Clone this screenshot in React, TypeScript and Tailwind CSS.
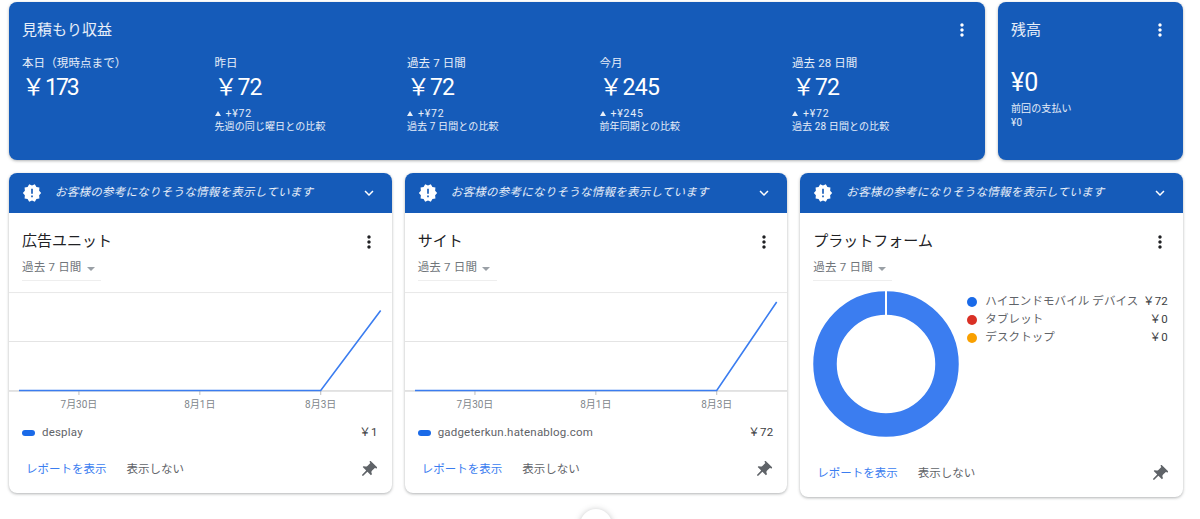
const font = '[font-family:Roboto,"Noto_Sans_CJK_JP",sans-serif]';

function Kebab({ className }: { className: string }) {
  return (
    <svg viewBox="0 0 24 24" className={`h-[20px] w-[20px] ${className}`} fill="currentColor">
      <path d="M12 8c1.1 0 2-.9 2-2s-.9-2-2-2-2 .9-2 2 .9 2 2 2zm0 2c-1.1 0-2 .9-2 2s.9 2 2 2 2-.9 2-2-.9-2-2-2zm0 6c-1.1 0-2 .9-2 2s.9 2 2 2 2-.9 2-2-.9-2-2-2z" />
    </svg>
  );
}

function Metric({ label, value, digitsClass, delta, note }: { label: string; value: string; digitsClass: string; delta?: string; note?: string }) {
  return (
    <div className="flex flex-col">
      <div className="h-[18px] text-[11.5px] leading-[18px] tracking-[0.1px] text-white/90 whitespace-nowrap">{label}</div>
      <div className="h-[32px] text-[23px] leading-[32px] text-white whitespace-nowrap">
        ￥<span className={digitsClass}>{value}</span>
      </div>
      {delta && (
        <div className="mt-[3px] flex h-[13px] items-center text-[10.5px] leading-[13px] tracking-[0.8px] text-white/90">
          <span className="h-0 w-0 border-x-[3px] border-b-[5px] border-x-transparent border-b-white/90" />
          <span className="ml-[5px]">{delta}</span>
        </div>
      )}
      {note && <div className="h-[14px] text-[10px] leading-[14px] tracking-[0.1px] text-white/90 whitespace-nowrap">{note}</div>}
    </div>
  );
}

function Banner() {
  return (
    <div className="flex h-[40px] items-center rounded-t-[8px] bg-[#155bb9] pl-[13px] pr-[14px] text-white">
      <svg viewBox="0 0 24 24" className="h-[20px] w-[20px]" fill="currentColor">
        <path d="M23 12l-2.44-2.78.34-3.68-3.61-.82-1.89-3.18L12 3 8.6 1.54 6.71 4.72l-3.61.81.34 3.68L1 12l2.44 2.78-.34 3.69 3.61.82 1.89 3.18L12 21l3.4 1.46 1.89-3.18 3.61-.82-.34-3.68L23 12zm-10 5h-2v-2h2v2zm0-4h-2V7h2v6z" />
      </svg>
      <span className="ml-[13px] flex-1 text-[11.5px] italic tracking-[0.25px] text-white/90 whitespace-nowrap">お客様の参考になりそうな情報を表示しています</span>
      <svg viewBox="0 0 24 24" className="h-[18px] w-[18px]" fill="currentColor">
        <path d="M16.59 8.59L12 13.17 7.41 8.59 6 10l6 6 6-6z" />
      </svg>
    </div>
  );
}

function CardHead({ title }: { title: string }) {
  return (
    <div className="pl-[13px] pr-[13px]">
      <div className="flex h-[28px] items-center justify-between pt-[1px]">
        <span className="text-[15px] text-[#202124] whitespace-nowrap">{title}</span>
        <Kebab className="text-[#202124]" />
      </div>
      <div className="flex h-[26px] w-[79px] items-center border-b border-[#eeeeee] pt-[1px]">
        <span className="text-[11.5px] tracking-[0.2px] text-[#70757a] whitespace-nowrap">過去 7 日間</span>
        <span className="ml-[5px] mt-[1px] h-0 w-0 border-x-[4.5px] border-t-[4px] border-x-transparent border-t-[#9aa0a6]" />
      </div>
    </div>
  );
}

function Chart({ d }: { d: string }) {
  return (
    <svg viewBox="0 0 383 122" className="mt-[11px] block h-[122px] w-full">
      <line x1="0" x2="383" y1="0.5" y2="0.5" stroke="#e8e8e8" />
      <line x1="0" x2="383" y1="49.5" y2="49.5" stroke="#e4e4e4" />
      <line x1="0" x2="383" y1="99" y2="99" stroke="#c8c8c8" />
      {[70, 191, 312].map((x) => (
        <line key={x} x1={x} x2={x} y1="99" y2="103" stroke="#bdbdbd" />
      ))}
      <path d={d} fill="none" stroke="#3b7df0" strokeWidth="1.6" />
      <g fontSize="10" fill="#80868b" textAnchor="middle" fontFamily='Roboto,"Noto Sans CJK JP",sans-serif'>
        <text x="70" y="116">7月30日</text>
        <text x="191" y="116">8月1日</text>
        <text x="312" y="116">8月3日</text>
      </g>
    </svg>
  );
}

function Footer({ className }: { className: string }) {
  return (
    <div className={`flex items-center pl-[17px] pr-[14px] text-[11.5px] ${className}`}>
      <span className="text-[#3b7df0] whitespace-nowrap">レポートを表示</span>
      <span className="ml-[20px] text-[#5f6368] whitespace-nowrap">表示しない</span>
      <svg viewBox="0 0 24 24" className="ml-auto h-[20px] w-[20px] rotate-45 text-[#5f6368]" fill="currentColor">
        <path d="M16 9V4h1c.55 0 1-.45 1-1s-.45-1-1-1H7c-.55 0-1 .45-1 1s.45 1 1 1h1v5c0 1.66-1.34 3-3 3v2h5.97v7l1 1 1-1v-7H19v-2c-1.66 0-3-1.34-3-3z" />
      </svg>
    </div>
  );
}

function LineCard({ title, name, value, d }: { title: string; name: string; value: string; d: string }) {
  return (
    <div className="flex h-[320px] flex-col rounded-[8px] bg-white shadow-[0_1px_3px_rgba(60,64,67,0.4)]">
      <Banner />
      <div className="pt-[14px]"><CardHead title={title} /></div>
      <Chart d={d} />
      <div className="mt-[10px] flex h-[18px] items-center pl-[13px] pr-[14px] text-[11.5px]">
        <span className="h-[6px] w-[13px] rounded-full bg-[#1a6ae8]" />
        <span className="ml-[7px] tracking-[0.2px] text-[#5f6368]">{name}</span>
        <span className="ml-auto tracking-[0.2px] text-[#3c4043]">{value}</span>
      </div>
      <Footer className="mt-[19px] h-[18px]" />
    </div>
  );
}

function Donut() {
  return (
    <svg viewBox="0 0 146 146" className="h-[146px] w-[146px] shrink-0">
      <circle cx="73" cy="73" r="61" fill="none" stroke="#3b7df0" strokeWidth="23.5" />
      <line x1="73" x2="73" y1="0" y2="24" stroke="#fff" strokeWidth="2" />
    </svg>
  );
}

function LegendRow({ color, name, value }: { color: string; name: string; value: string }) {
  return (
    <div className="flex h-[18px] items-center text-[11.5px]">
      <span className={`h-[10px] w-[10px] rounded-full ${color}`} />
      <span className="ml-[8px] tracking-[0.1px] text-[#5f6368] whitespace-nowrap">{name}</span>
      <span className="ml-auto tracking-[0.2px] text-[#3c4043]">{value}</span>
    </div>
  );
}

export default function App() {
  return (
    <div className={`relative h-[519px] overflow-hidden bg-white pl-[9px] pr-[17px] pt-[2px] ${font}`}>
      <div className="flex gap-[13px]">
        <div className="h-[158px] w-[976px] rounded-[8px] bg-[#155bb9] pl-[13px] pr-[13px] pt-[18px] shadow-[0_1px_3px_rgba(60,64,67,0.4)]">
          <div className="flex h-[20px] items-center justify-between">
            <span className="text-[15px] text-white/90">見積もり収益</span>
            <Kebab className="text-white" />
          </div>
          <div className="mt-[14px] grid grid-cols-[192.5px_192.5px_192.5px_192.5px_1fr]">
            <Metric label="本日（現時点まで）" value="173" digitsClass="tracking-[-2px]" />
            <Metric label="昨日" value="72" digitsClass="tracking-[-1px]" delta="+¥72" note="先週の同じ曜日との比較" />
            <Metric label="過去 7 日間" value="72" digitsClass="tracking-[-1px]" delta="+¥72" note="過去 7 日間との比較" />
            <Metric label="今月" value="245" digitsClass="tracking-[-0.7px]" delta="+¥245" note="前年同期との比較" />
            <Metric label="過去 28 日間" value="72" digitsClass="tracking-[-1px]" delta="+¥72" note="過去 28 日間との比較" />
          </div>
        </div>
        <div className="h-[158px] flex-1 rounded-[8px] bg-[#155bb9] pl-[13px] pr-[13px] pt-[18px] shadow-[0_1px_3px_rgba(60,64,67,0.4)]">
          <div className="flex h-[20px] items-center justify-between">
            <span className="text-[15px] text-white/90">残高</span>
            <Kebab className="text-white" />
          </div>
          <div className="mt-[27px] h-[32px] text-[25px] leading-[32px] text-white">¥0</div>
          <div className="mt-[3px] h-[14px] text-[10px] leading-[14px] tracking-[0.1px] text-white/90">前回の支払い</div>
          <div className="h-[14px] text-[10px] leading-[14px] tracking-[0.3px] text-white/90">¥0</div>
        </div>
      </div>

      <div className="mt-[13px] grid grid-cols-3 items-start gap-[13px]">
        <LineCard title="広告ユニット" name="desplay" value="￥1" d="M10 98.5H312L372 18.5" />
        <LineCard title="サイト" name="gadgeterkun.hatenablog.com" value="￥72" d="M10 98.5H312L372 10" />
        <div className="flex h-[324px] flex-col rounded-[8px] bg-white shadow-[0_1px_3px_rgba(60,64,67,0.4)]">
          <Banner />
          <div className="pt-[14px]"><CardHead title="プラットフォーム" /></div>
          <div className="mt-[10px] flex pl-[13px] pr-[15px]">
            <Donut />
            <div className="ml-[8px] mt-[2px] flex-1">
              <LegendRow color="bg-[#1a6ae8]" name="ハイエンドモバイル デバイス" value="￥72" />
              <LegendRow color="bg-[#d93025]" name="タブレット" value="￥0" />
              <LegendRow color="bg-[#f9a000]" name="デスクトップ" value="￥0" />
            </div>
          </div>
          <Footer className="mt-[28px] h-[18px]" />
        </div>
      </div>

      <div className="absolute left-[580px] top-[509px] h-[32px] w-[32px] rounded-full bg-white shadow-[0_1px_6px_rgba(60,64,67,0.35)]" />
    </div>
  );
}
